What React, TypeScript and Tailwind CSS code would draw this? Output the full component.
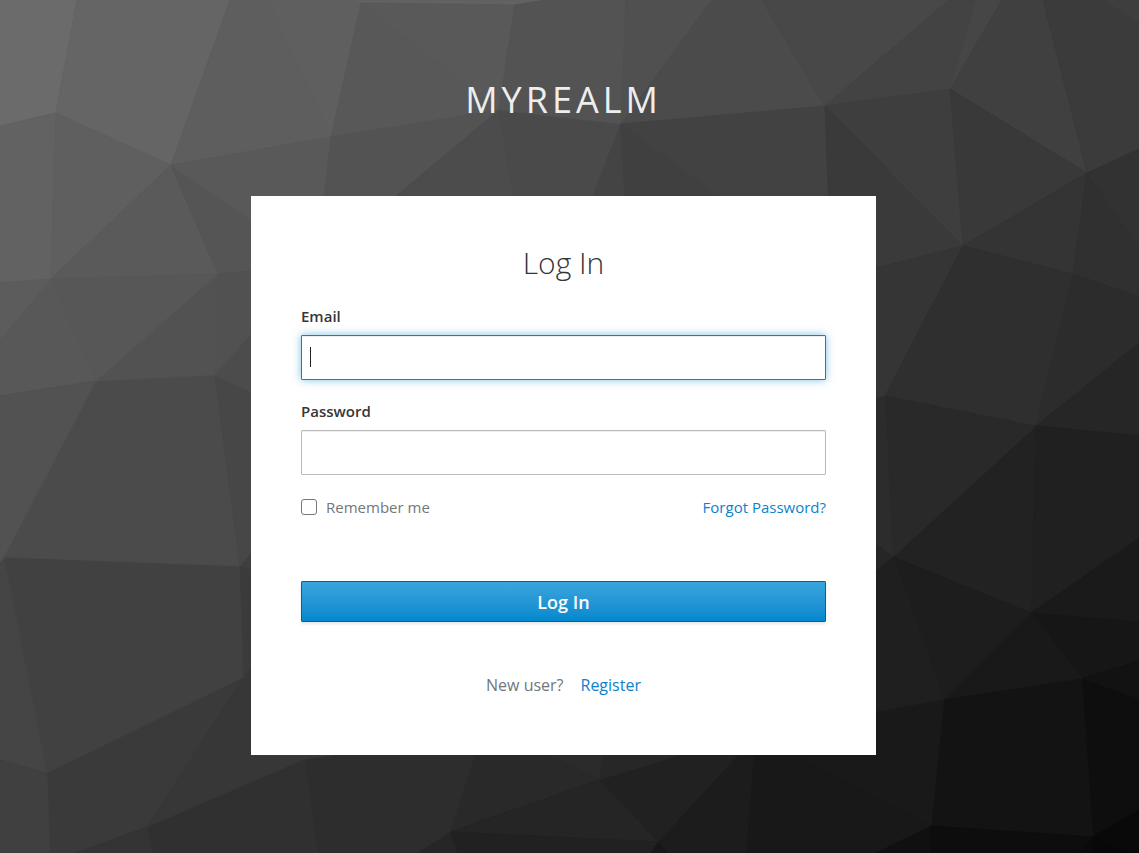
import React from "react";

const facets: [string, string][] = [
  ["#6b6b6b", "0,0 77,0 56,113 0,126"],
  ["#656565", "77,0 230,0 171,165 56,113"],
  ["#5e5e5e", "230,0 267,0 331,137 171,165"],
  ["#5f5f5f", "267,0 350,0 361,3 331,137"],
  ["#626262", "350,0 545,0 515,5 361,3"],
  ["#626262", "0,126 56,113 51,279 0,283"],
  ["#5f5f5f", "56,113 171,165 51,279"],
  ["#5a5a5a", "171,165 218,274 51,279"],
  ["#555555", "171,165 251,220 251,271 218,274"],
  ["#595959", "171,165 331,137 324,220 251,220"],
  ["#585858", "361,3 499,110 331,137"],
  ["#595959", "361,3 515,5 499,110"],
  ["#535353", "331,137 499,110 396,196 324,196"],
  ["#4c4c4c", "499,110 514,196 396,196"],
  ["#4a4a4a", "499,110 621,124 593,196 514,196"],
  ["#535353", "545,0 626,0 621,124 499,110 515,5"],
  ["#505050", "626,0 712,0 621,124"],
  ["#4b4b4b", "712,0 762,0 825,106 621,124"],
  ["#444444", "621,124 625,196 593,196"],
  ["#404040", "621,124 720,196 625,196"],
  ["#424242", "621,124 825,106 831,196 720,196"],
  ["#484848", "762,0 949,0 825,106"],
  ["#434343", "949,0 976,0 950,89 825,106"],
  ["#464646", "976,0 1002,0 950,89"],
  ["#404040", "1002,0 1043,0 1087,173 950,89"],
  ["#3b3b3b", "1043,0 1103,0 1139,23 1139,149 1087,173"],
  ["#3e3e3e", "1103,0 1139,0 1139,23"],
  ["#3e3e3e", "825,106 950,89 963,246"],
  ["#3a3a3a", "825,106 963,246 876,268 831,268"],
  ["#393939", "950,89 1087,173 963,246"],
  ["#343434", "1087,173 963,246 1073,274"],
  ["#303030", "1087,173 1139,246 1139,297 1073,274"],
  ["#323232", "1087,173 1139,149 1139,246"],
  ["#353535", "963,246 885,396 876,398 876,268"],
  ["#2f2f2f", "963,246 1073,274 1036,426 885,396"],
  ["#2c2c2c", "1073,274 1139,297 1139,343 1036,426"],
  ["#262626", "1036,426 1139,343 1139,436"],
  ["#202020", "1036,426 1139,436 1139,538 1031,613"],
  ["#222222", "1036,426 893,557 1031,613"],
  ["#292929", "885,396 1036,426 893,557"],
  ["#2c2c2c", "885,396 893,557 876,544 876,398"],
  ["#262626", "893,557 876,544 876,571"],
  ["#1d1d1d", "893,557 1031,613 944,700"],
  ["#1f1f1f", "893,557 944,700 876,712 876,571"],
  ["#1a1a1a", "1031,613 1139,538 1139,622"],
  ["#161616", "1031,613 1139,622 1139,661 1082,679"],
  ["#191919", "1031,613 944,700 1082,679"],
  ["#121212", "1082,679 1139,661 1139,700"],
  ["#0e0e0e", "1082,679 1139,700 1139,810 1093,837"],
  ["#131313", "944,700 1082,679 1093,837 931,826"],
  ["#191919", "944,700 931,826 800,760 800,712 876,712"],
  ["#181818", "754,740 800,740 800,760 931,826 876,853 746,853"],
  ["#101010", "931,826 931,853 876,853"],
  ["#0d0d0d", "931,826 1093,837 1080,853 931,853"],
  ["#0a0a0a", "1093,837 1093,853 1080,853"],
  ["#080808", "1093,837 1130,853 1093,853"],
  ["#090909", "1093,837 1139,810 1139,853 1130,853"],
  ["#1c1c1c", "738,755 754,755 746,853 668,853 658,842"],
  ["#171717", "658,842 668,853 650,853"],
  ["#212121", "599,780 680,755 738,755 658,842"],
  ["#272727", "599,780 603,755 680,755"],
  ["#2b2b2b", "599,780 548,755 603,755"],
  ["#292929", "450,832 475,755 548,755 599,780"],
  ["#252525", "450,832 599,780 658,842"],
  ["#212121", "450,832 658,842 650,853 457,853"],
  ["#262626", "450,832 457,853 417,853"],
  ["#2d2d2d", "305,759 332,755 475,755 450,832 417,853 318,853"],
  ["#303030", "305,759 318,853 153,853 147,827"],
  ["#3a3a3a", "244,677 147,827 76,853 50,853 47,773"],
  ["#343434", "147,827 153,853 76,853"],
  ["#373737", "244,677 251,667 251,755 332,755 305,759 147,827"],
  ["#414141", "4,557 240,566 244,677 47,773"],
  ["#454545", "4,557 47,773 0,760 0,562"],
  ["#404040", "0,760 47,773 50,853 0,853"],
  ["#3b3b3b", "240,566 251,569 251,667 244,677"],
  ["#3f3f3f", "240,566 251,552 251,569"],
  ["#4b4b4b", "96,381 215,375 240,566 4,557"],
  ["#474747", "215,375 251,392 251,552 240,566"],
  ["#4c4c4c", "215,375 251,334 251,392"],
  ["#515151", "218,274 251,271 251,334 215,375"],
  ["#525252", "218,274 215,375 96,381"],
  ["#575757", "51,279 218,274 96,381"],
  ["#585858", "51,279 96,381 0,396 0,340"],
  ["#5c5c5c", "51,279 0,340 0,283"],
  ["#525252", "96,381 4,557 0,562 0,396"],
];

function Backdrop() {
  return (
    <svg
      className="absolute inset-0 -z-10 h-full w-full"
      viewBox="0 0 1139 853"
      preserveAspectRatio="xMidYMid slice"
      aria-hidden="true"
    >
      {facets.map(([color, points]) => (
        <polygon key={points} points={points} fill={color} stroke={color} strokeWidth="0.8" />
      ))}
    </svg>
  );
}

const field =
  "block h-[45px] w-full rounded-[1px] border bg-white px-2 text-base text-[#363636] outline-none";
const label = "block text-[15px] leading-6 font-semibold text-[#363636]";
const link = "text-[#0c82cb] hover:underline";

export default function App() {
  return (
    <div className="relative isolate min-h-screen overflow-hidden bg-[#393939] pr-3 font-['Open_Sans',sans-serif]">
      <Backdrop />
      <header className="px-3 pt-[78px] pb-[74px] text-center text-4xl leading-[44px] tracking-[4px] text-[#eeeeee] uppercase">
        myrealm
      </header>
      <main className="mx-auto w-full max-w-[625px] bg-white px-[50px] pt-[47px] pb-[58px]">
        <h1 className="text-center text-[30px] leading-10 font-light text-[#363636]">Log In</h1>
        <form className="mt-[21px]" onSubmit={(e) => e.preventDefault()}>
          <label htmlFor="email" className={label}>
            Email
          </label>
          <div className="relative mt-[7px]">
            <input
              id="email"
              type="text"
              placeholder=" "
              autoComplete="off"
              className={`${field} peer border-[#0088ce] shadow-[inset_0_1px_1px_rgba(3,3,3,0.075),0_0_8px_rgba(0,136,206,0.5)] placeholder-shown:caret-transparent`}
            />
            <span className="absolute top-3 left-[9px] hidden h-5 w-px bg-[#222222] peer-placeholder-shown:block" />
          </div>
          <label htmlFor="password" className={`${label} mt-[19px]`}>
            Password
          </label>
          <input
            id="password"
            type="password"
            autoComplete="off"
            className={`${field} mt-[7px] border-[#bbbbbb] shadow-[inset_0_1px_1px_rgba(3,3,3,0.075)]`}
          />
          <div className="mt-5 flex items-center justify-between text-[15px] leading-6">
            <label className="flex items-center gap-[9px] text-[#72767b]">
              <input
                type="checkbox"
                className="h-4 w-4 appearance-none rounded-[3px] border border-[#767676] bg-white checked:bg-[#0088ce]"
              />
              Remember me
            </label>
            <a href="#forgot" className={link}>
              Forgot Password?
            </a>
          </div>
          <button
            type="submit"
            className="mt-[62px] block h-[41px] w-full rounded-[1px] border border-[#00659c] bg-linear-to-b from-[#39a5dc] to-[#0088ce] text-lg leading-6 font-semibold text-white shadow-[0_2px_3px_rgba(3,3,3,0.1)]"
          >
            Log In
          </button>
        </form>
        <p className="mt-[51px] flex justify-center gap-[17px] text-base leading-6 text-[#72767b]">
          <span>New user?</span>
          <a href="#register" className={link}>
            Register
          </a>
        </p>
      </main>
    </div>
  );
}
